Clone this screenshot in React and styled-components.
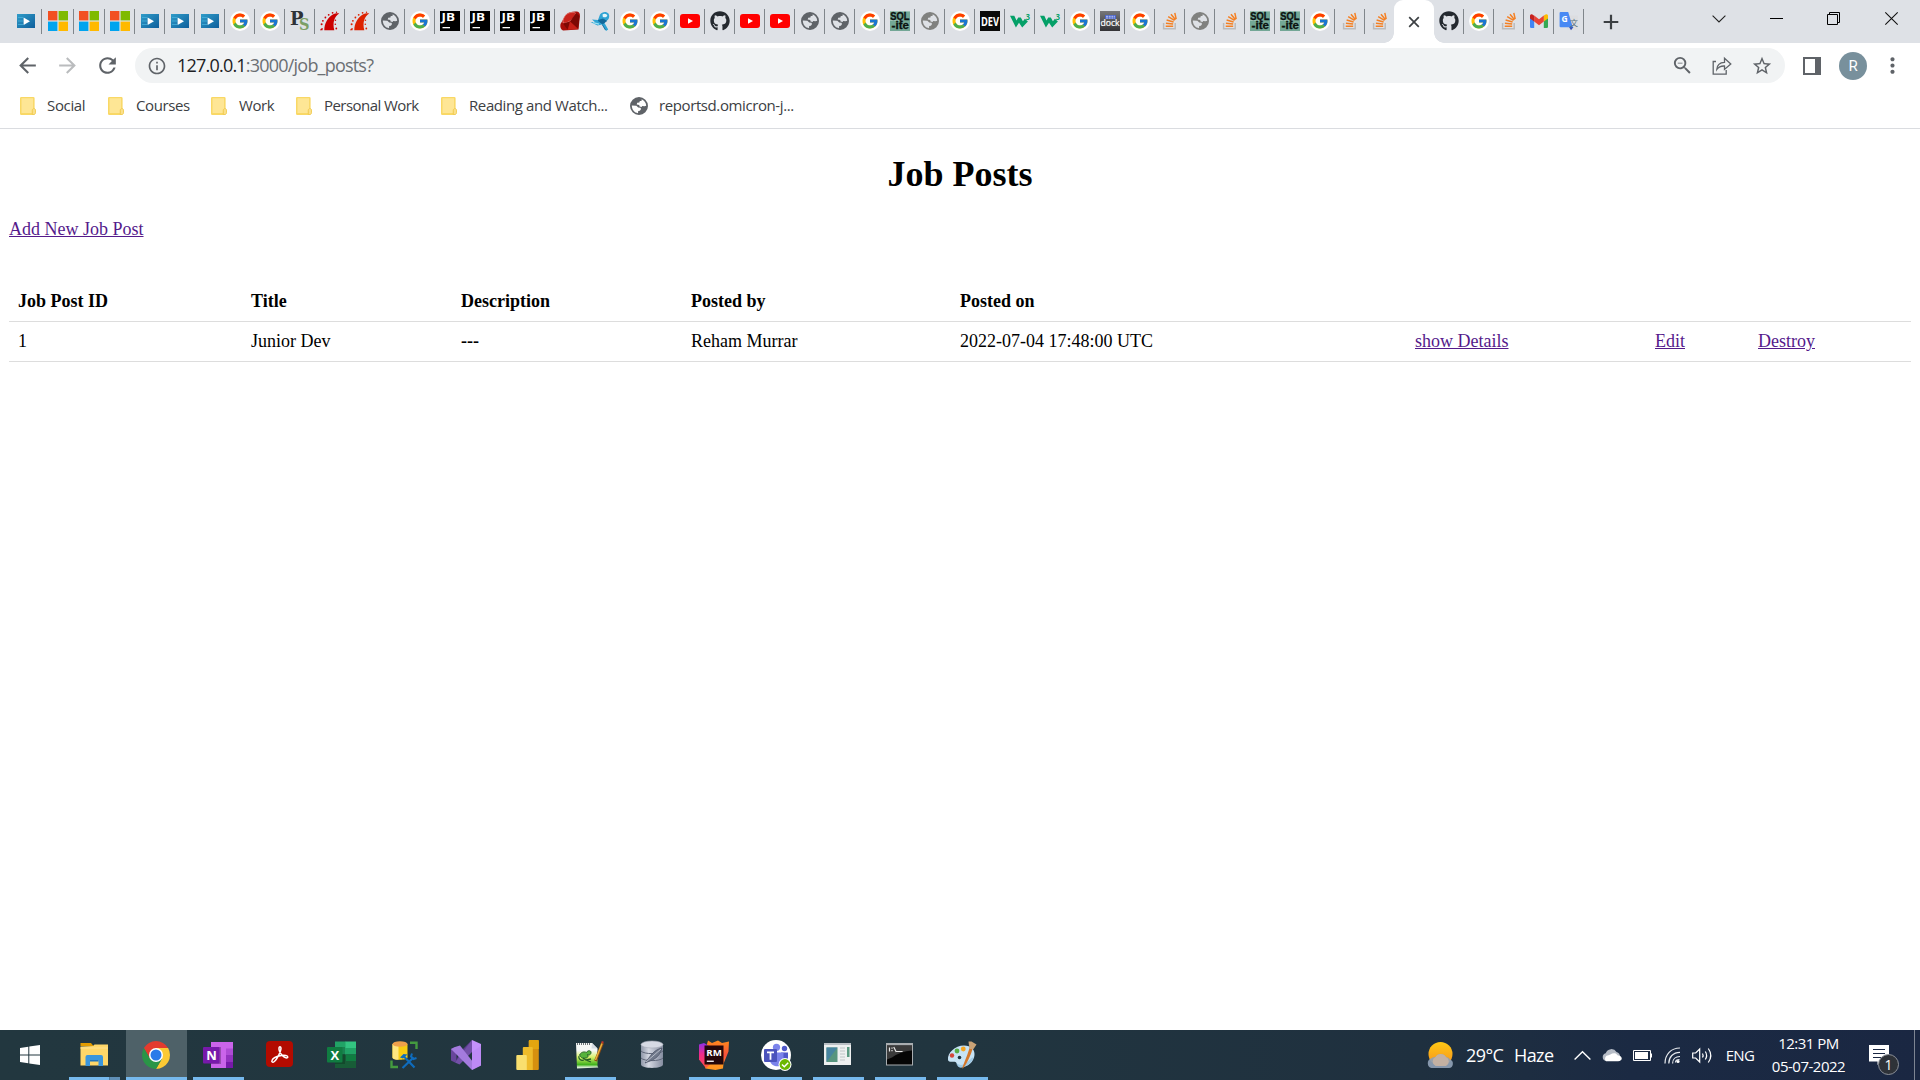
import React from "react";
import styled, { createGlobalStyle, css } from "styled-components";
import { FcGoogle } from "react-icons/fc";
import { FaGithub } from "react-icons/fa";
import {
  MdArrowBack,
  MdArrowForward,
  MdRefresh,
  MdInfoOutline,
  MdZoomOut,
  MdStarBorder,
  MdMoreVert,
} from "react-icons/md";

const GlobalStyle = createGlobalStyle`
  * { box-sizing: border-box; }
  html, body { margin: 0; padding: 0; background: #fff; overflow: hidden; }
  svg { display: block; overflow: visible; }
`;

const uiFont = `"Open Sans", "Noto Sans", sans-serif`;

const Screen = styled.div`
  width: 1920px;
  height: 1080px;
  display: flex;
  flex-direction: column;
  overflow: hidden;
  font-family: ${uiFont};
`;

/* ---------- tab strip ---------- */

const TabStrip = styled.div`
  height: 43px;
  flex: none;
  display: flex;
  align-items: stretch;
  padding-left: 11px;
  background: #dee1e6;
`;

const Tab = styled.div`
  width: ${(p) => p.$w || 30}px;
  flex: none;
  display: flex;
  align-items: flex-start;
  padding: 11px 0 0 ${(p) => p.$pad || 5}px;
  ${(p) =>
    !p.$bare &&
    css`
      background: linear-gradient(#80868b, #80868b) right 9px / 1px 25px no-repeat;
    `}
`;

const ActiveTab = styled.div`
  position: relative;
  width: 40px;
  flex: none;
  display: flex;
  align-items: center;
  justify-content: center;
  background: #fff;
  border-radius: 9px 9px 0 0;
  &::before,
  &::after {
    content: "";
    position: absolute;
    bottom: 0;
    width: 10px;
    height: 10px;
  }
  &::before {
    left: -10px;
    background: radial-gradient(circle at 0 0, transparent 9.5px, #fff 10px);
  }
  &::after {
    right: -10px;
    background: radial-gradient(circle at 100% 0, transparent 9.5px, #fff 10px);
  }
`;

const NewTab = styled.div`
  width: 54px;
  display: flex;
  align-items: center;
  justify-content: center;
`;

const WindowControls = styled.div`
  margin-left: auto;
  display: flex;
  height: 37px;
`;

const WindowButton = styled.div`
  width: ${(p) => p.$w || 57}px;
  display: flex;
  align-items: center;
  justify-content: center;
`;

const Disc = styled.div`
  width: 20px;
  height: 20px;
  display: flex;
  align-items: center;
  justify-content: center;
  background: #fff;
  border-radius: 50%;
`;

const VideoIcon = () => (
  <svg width="20" height="20" viewBox="0 0 20 20">
    <defs>
      <linearGradient id="vid" x1="0" y1="0" x2="1" y2="1">
        <stop offset="0" stopColor="#2f9cc9" />
        <stop offset="1" stopColor="#0f5f9c" />
      </linearGradient>
    </defs>
    <rect x="1" y="3" width="18" height="14" fill="url(#vid)" />
    <path d="M2 6.5h5M2 10h5M2 13.5h5" stroke="#46b3dc" strokeWidth=".8" />
    <path d="M7.6 6.6v7.4l6.4-3.7z" fill="#fff" />
  </svg>
);

const MicrosoftIcon = () => (
  <svg width="20" height="20" viewBox="0 0 20 20">
    <path fill="#f25022" d="M0 0h9.4v9.4H0z" />
    <path fill="#7fba00" d="M10.6 0H20v9.4h-9.4z" />
    <path fill="#00a4ef" d="M0 10.6h9.4V20H0z" />
    <path fill="#ffb900" d="M10.6 10.6H20V20h-9.4z" />
  </svg>
);

const GoogleIcon = () => (
  <Disc>
    <FcGoogle size={18} />
  </Disc>
);

const PsIcon = () => (
  <svg width="20" height="20" viewBox="0 0 20 20" fontFamily="DejaVu Serif, serif" fontWeight="700">
    <text x="0" y="13.500" fontSize="18" fill="#2e3338" textLength="13.500" lengthAdjust="spacingAndGlyphs">P</text>
    <text x="9" y="19.300" fontSize="17" fill="#7b9f66" textLength="10.500" lengthAdjust="spacingAndGlyphs">S</text>
  </svg>
);

const RailsIcon = ({ color }) => (
  <svg width="20" height="20" viewBox="0 0 20 20" fill={color}>
    <path d="M4.300 19.300C4.300 12.500 7.800 6.300 12.800 3.500c2.200-1.200 4.500-1.400 6.400-.9C14.500 5.500 12.300 11.500 14.300 19.300z" />
    <path d="M0 19.300c.7-1.500 1.600-2.200 2.800-2.300l-.3 2.300z" />
    <circle cx="1.600" cy="13.300" r="1" />
    <circle cx="2.900" cy="9.800" r=".9" />
    <circle cx="5.400" cy="6.500" r=".9" />
    <circle cx="8.700" cy="3.800" r=".9" />
    <circle cx="12.600" cy="1.800" r=".9" />
    <circle cx="16.500" cy="1.200" r=".7" />
    <circle cx="15.400" cy="9.300" r=".8" />
    <circle cx="15.300" cy="13.300" r=".8" />
    <circle cx="16.300" cy="17.500" r=".9" />
  </svg>
);

const Centered = styled.div`
  width: 20px;
  height: 20px;
  display: flex;
  align-items: center;
  justify-content: center;
  color: ${(p) => p.$color};
`;

const GlobeIcon = ({ color = "#5f6368" }) => (
  <svg width="20" height="20" viewBox="0 0 20 20">
    <path
      fill={color}
      fillRule="evenodd"
      d="M10 1a9 9 0 1 0 0 18a9 9 0 0 0 0-18zM12.700 3.300C15.500 4.500 17.200 7 17.200 9.700l-1.700.6-2.300-.4-.6 1.100-2-.6-.4-1.500-2.500-.5.500-1.600 2.200-.2.400-1.500 1.700-.2zM2.800 9.600l4.600.1 1.800 1.800 2.200.2.700 1.300-1.200 1.700-1.700.3-.2 2.200C5.600 16.900 2.900 14 2.800 9.600z"
    />
  </svg>
);

const JetBrainsIcon = () => (
  <svg width="20" height="20" viewBox="0 0 20 20">
    <path d="M0 0h20v20H0z" />
    <text x="1.500" y="9.600" fontSize="10" fontWeight="700" fontFamily="Open Sans, sans-serif" fill="#fff" textLength="13.500" lengthAdjust="spacingAndGlyphs">JB</text>
    <path d="M2.500 16h7.500v1.300H2.500z" fill="#fff" />
  </svg>
);

const RubyIcon = () => (
  <svg width="20" height="20" viewBox="0 0 20 20">
    <path d="M6 3.500C9 1 14 0 18 .8c1.500 1 2 2.500 1.900 4.200L18.500 18.500 3 19.500C.8 18.500-.2 16 .5 13z" fill="#a80d08" />
    <path d="M6 3.800C9 1.200 13 .8 15.500 2c.5 2-3 6.500-6 8.300-2 1.300-5.500 2.500-6.500 1.500-.8-2.500 1.500-6.500 3-8z" fill="#c9231c" stroke="#e9938c" strokeWidth=".7" />
    <path d="M16 2l3.500 3-1.300 12.500L10 10.500zM3 12.500l7-2-2.500 8z" fill="#7c0804" />
    <path d="M10 10.500l8 7.500-10 .8z" fill="#c62018" />
  </svg>
);

const BirdIcon = () => (
  <svg width="20" height="20" viewBox="0 0 20 20">
    <path d="M10 3.500C12 .5 16.500 0 18.500 2.500c1.300 2 .8 5-.8 6.500l-3.500 2.500 4 7-2.200 1.500-4-6.500-4.500 1L.5 11l4.500.3L2 8.500l6 .5z" fill="#2fa4d4" />
    <path d="M12.500 3.500c2-1.500 4.500-.5 4.800 1.300-1 1.700-3 2-4.500.9z" fill="#e3f6fb" />
    <path d="M8 9.500l5-1.500 3.500 2-4 3zM12.500 14l3 5" fill="#14699b" stroke="#14699b" strokeWidth=".9" />
    <path d="M3 11.600l6 1.500" stroke="#9fe0f2" strokeWidth="1.200" />
  </svg>
);

const YouTubeIcon = () => (
  <svg width="20" height="20" viewBox="0 0 20 20">
    <rect y="3" width="20" height="14" rx="3" fill="#f00" />
    <path d="M8 7.200v5.600l5-2.800z" fill="#fff" />
  </svg>
);

const SqliteIcon = () => (
  <svg width="20" height="20" viewBox="0 0 20 20">
    <path d="M0 0h20v20H0z" fill="#73a796" />
    <path d="M0 0h20v1H0zM0 9h13v1H0z" fill="#9cc3b6" />
    <g fontFamily="Liberation Sans, sans-serif" fontWeight="700" fill="#0b1210" stroke="#0b1210" strokeWidth=".3">
      <text x=".3" y="8.800" fontSize="10.500" textLength="19.200" lengthAdjust="spacingAndGlyphs">SQL</text>
      <text x="1.500" y="18.200" fontSize="11.500" textLength="17.500" lengthAdjust="spacingAndGlyphs">-ite</text>
    </g>
  </svg>
);

const DevIcon = () => (
  <svg width="20" height="20" viewBox="0 0 20 20">
    <path d="M0 0h20v20H0z" fill="#0a0a0a" />
    <text x=".9" y="14.600" fontSize="12.500" fontWeight="700" fontFamily="Open Sans, sans-serif" fill="#fff" textLength="18.200" lengthAdjust="spacingAndGlyphs">DEV</text>
  </svg>
);

const W3Icon = () => (
  <svg width="20" height="20" viewBox="0 0 20 20">
    <path d="M0 4.800h4.300l2.200 4.800 1.700-3.200h2.600l2.100 3.900 2-2.500 3 2.700-5.700 5.900-3.200-4.700-3.100 4.700z" fill="#04a068" />
    <text x="15.700" y="9" fontSize="8" fontWeight="700" fontFamily="Open Sans, sans-serif" fill="#04a068" textLength="4.200" lengthAdjust="spacingAndGlyphs">3</text>
  </svg>
);

const DockIcon = () => (
  <svg width="20" height="20" viewBox="0 0 20 20">
    <defs>
      <linearGradient id="dock" x1="0" y1="0" x2="0" y2="1">
        <stop offset="0" stopColor="#77777a" />
        <stop offset="1" stopColor="#333336" />
      </linearGradient>
    </defs>
    <path d="M0 0h20v20H0z" fill="url(#dock)" />
    <rect x="5" y="4" width="11" height="4" fill="#4a63c8" />
    <path d="M6 5.300h9M6 7h9" stroke="#dde3ff" strokeWidth=".8" strokeDasharray="2 .7" />
    <text x=".4" y="15.300" fontSize="9.500" fontFamily="Open Sans, sans-serif" fill="#fff" stroke="#fff" strokeWidth=".2" textLength="19.200" lengthAdjust="spacingAndGlyphs">dock</text>
  </svg>
);

const StackIcon = () => (
  <svg width="20" height="20" viewBox="0 0 20 20" fill="none">
    <path d="M3.600 12v5.700h11.600V12" stroke="#bcbbbb" strokeWidth="1.500" />
    <g stroke="#f48024" strokeWidth="1.500">
      <path d="M5.700 15.300h7.500M5.900 12.300l7.300.8M6.600 9l7 2M8.200 5.700l6.300 3.700M11 3.200l4.500 5.500M14.800 1.900l1.400 6.200" />
    </g>
  </svg>
);

const GmailIcon = () => (
  <svg width="20" height="20" viewBox="0 0 20 20">
    <path d="M1 5.500h4.200V17H2.300A1.300 1.300 0 0 1 1 15.700z" fill="#4285f4" />
    <path d="M14.800 5.500H19v10.200a1.300 1.300 0 0 1-1.300 1.300h-2.900z" fill="#34a853" />
    <path d="M14.800 4.500L17 3.300c1.200-.4 2 .4 2 1.700v2.400l-4.200 3.200z" fill="#fbbc04" />
    <path d="M5.200 4.500v6.100L10 14.300l4.800-3.700V4.500L10 8.200z" fill="#ea4335" />
    <path d="M1 5c0-1.500 1.200-2.300 2.400-1.500l1.800 1.200v5.900L1 7.400z" fill="#c5221f" />
  </svg>
);

const TranslateIcon = () => (
  <svg width="20" height="20" viewBox="0 0 20 20">
    <rect x="8" y="4.500" width="11" height="14" rx="1" fill="#dcdde0" />
    <path d="M10 16h4.500L12 19.300z" fill="#3450b5" />
    <path d="M1.600 1h7.600l4.600 15.300H1.600A1 1 0 0 1 .6 15.300V2a1 1 0 0 1 1-1z" fill="#4889f4" />
    <text x="11" y="14.500" fontSize="8" fontFamily="Noto Sans CJK SC, sans-serif" fill="#546e7a">文</text>
    <text x="2.400" y="11" fontSize="8.500" fontWeight="700" fontFamily="Open Sans, sans-serif" fill="#fff">G</text>
  </svg>
);

const GithubIcon = () => (
  <Centered $color="#24292f">
    <FaGithub size={20} />
  </Centered>
);

const tabIcons = {
  video: <VideoIcon />,
  ms: <MicrosoftIcon />,
  google: <GoogleIcon />,
  ps: <PsIcon />,
  rails: <RailsIcon color="#cc0000" />,
  rails2: <RailsIcon color="#dd2200" />,
  globe: <GlobeIcon />,
  globe2: <GlobeIcon color="#80817f" />,
  jb: <JetBrainsIcon />,
  ruby: <RubyIcon />,
  bird: <BirdIcon />,
  yt: <YouTubeIcon />,
  github: <GithubIcon />,
  sql: <SqliteIcon />,
  dev: <DevIcon />,
  w3: <W3Icon />,
  dock: <DockIcon />,
  so: <StackIcon />,
  gmail: <GmailIcon />,
  translate: <TranslateIcon />,
};

const tabsBefore = [
  ["video", 31], ["ms", 32, 6], ["ms", 31], "ms", "video", "video", "video", "google", "google", "ps",
  "rails", "rails2", "globe", "google", "jb", "jb", "jb", "jb", "ruby", "bird", "google", "google",
  "yt", "github", "yt", "yt", "globe", "globe", "google", "sql", "globe2", "google", "dev", "w3", "w3",
  "google", "dock", "google", "so", "globe2", "so", "sql", "sql", "google", "so", "so",
];
const tabsAfter = ["github", "google", "so", "gmail", "translate"];

const renderTab = (entry, i, list, bareLast) => {
  const [name, w, pad] = Array.isArray(entry) ? entry : [entry];
  const bare = bareLast && i === list.length - 1;
  return (
    <Tab key={i} $w={bare ? 29 : w} $pad={pad} $bare={bare}>
      {tabIcons[name]}
    </Tab>
  );
};

/* ---------- toolbar ---------- */

const Toolbar = styled.div`
  height: 45px;
  flex: none;
  display: flex;
  align-items: center;
  padding: 0 11px 0 7px;
  background: #fff;
`;

const NavButton = styled.div`
  width: 40px;
  height: 34px;
  display: flex;
  align-items: center;
  justify-content: center;
  color: ${(p) => (p.$off ? "#babcbe" : "#5f6368")};
`;

const Omnibox = styled.div`
  width: 1650px;
  height: 35px;
  margin-left: 8px;
  display: flex;
  align-items: center;
  padding: 0 3px 0 12px;
  border-radius: 18px;
  background: #f1f3f4;
  color: #5f6368;
`;

const Address = styled.div`
  flex: 1;
  margin: 0 0 1px 10px;
  font-size: 18px;
  line-height: 24px;
  letter-spacing: -0.79px;
  color: #6b6f73;
  span {
    color: #202124;
  }
`;

const Action = styled.div`
  width: 40px;
  display: flex;
  justify-content: center;
`;

const PanelButton = styled.div`
  width: 18px;
  height: 18px;
  margin-left: 18px;
  border: solid #5f6368;
  border-width: 2px 6px 2px 2px;
`;

const Avatar = styled.div`
  width: 28px;
  height: 28px;
  margin-left: 18px;
  border-radius: 50%;
  background: #78909c;
  color: #fff;
  font: 15px/28px Roboto, sans-serif;
  text-align: center;
`;

const Menu = styled.div`
  margin-left: 13px;
  color: #5f6368;
`;

/* ---------- bookmarks ---------- */

const Bookmarks = styled.div`
  height: 41px;
  flex: none;
  display: flex;
  align-items: center;
  padding: 0 0 5px 20px;
  border-bottom: 1px solid #dadce0;
`;

const Bookmark = styled.div`
  width: ${(p) => p.$w}px;
  display: flex;
  align-items: center;
  gap: ${(p) => p.$gap || 12}px;
  white-space: nowrap;
  color: #3c4043;
`;

const BookmarkLabel = styled.span`
  padding-bottom: 1px;
  font-size: 15px;
  line-height: 19px;
  letter-spacing: ${(p) => p.$track || -0.4}px;
`;

const FolderIcon = () => (
  <svg width="16" height="18" viewBox="0 0 16 18">
    <path d="M1.300 0h12A1.300 1.300 0 0 1 14.600 1.300v15.400A1.300 1.300 0 0 1 13.300 18h-12A1.300 1.300 0 0 1 0 16.700V1.300A1.300 1.300 0 0 1 1.300 0z" fill="#f9d865" />
    <path d="M1.500 1.200h11.600v10.600l-1.200 1.400V16H1.500z" fill="#fee695" />
    <path d="M12.300 17.500v-4.300c0-1.200 1-1.600 1.700-1.600s1.500.5 1.500 1.500v2.700c0 1-.8 1.700-1.700 1.700z" fill="#fbe08a" stroke="#efc94f" strokeWidth=".9" />
  </svg>
);

const bookmarks = [
  { label: "Social", w: 88, track: -0.35, gap: 11 },
  { label: "Courses", w: 103 },
  { label: "Work", w: 85 },
  { label: "Personal Work", w: 145, track: -0.55 },
  { label: "Reading and Watch...", w: 188 },
  { label: "reportsd.omicron-j...", w: 180, gap: 10, globe: true },
];

/* ---------- page ---------- */

const Page = styled.main`
  flex: 1;
  padding: 0 9px;
  font: 18px/21px "Liberation Serif", serif;
  color: #000;
`;

const Heading = styled.h1`
  margin: 24px 0;
  font-size: 36px;
  line-height: 42px;
  font-weight: 700;
  text-align: center;
`;

const Link = styled.a`
  color: #551a8b;
  text-decoration: underline;
`;

const Table = styled.table`
  width: 1902px;
  margin-top: 42px;
  table-layout: fixed;
  border-collapse: separate;
  border-spacing: 0;
  th,
  td {
    height: 40px;
    padding: 9px;
    border-bottom: 1px solid #ddd;
    text-align: left;
    white-space: nowrap;
  }
`;

const columns = [
  [233, "Job Post ID"],
  [210, "Title"],
  [230, "Description"],
  [269, "Posted by"],
  [455, "Posted on"],
  [240, ""],
  [103, ""],
  [162, ""],
];

/* ---------- taskbar ---------- */

const Taskbar = styled.div`
  height: 50px;
  flex: none;
  display: flex;
  background: linear-gradient(90deg, #22373f 0%, #21353f 50%, #1f303f 74%, #1b2a43 85%, #1a2742 100%);
  color: #fff;
`;

const StartButton = styled.div`
  width: 64px;
  display: flex;
  align-items: center;
  justify-content: center;
  padding-right: 4px;
`;

const TaskButton = styled.div`
  width: 61px;
  margin-right: 1px;
  display: flex;
  flex-direction: column;
  align-items: center;
  background: ${(p) => (p.$state === "active" ? "#4e6168" : "transparent")};
  svg {
    margin: 10px 1px 7px 0;
  }
  &::after {
    content: "";
    width: ${(p) => (p.$state === "active" ? 61 : 51)}px;
    height: 3px;
    background: ${(p) =>
      p.$state === "stack"
        ? "linear-gradient(90deg, #76b9ed 40px, #3f6a8b 40px, #5f8fb6 41px)"
        : p.$state
        ? "#76b9ed"
        : "transparent"};
  }
`;

const Tray = styled.div`
  flex: 1;
  display: flex;
  justify-content: flex-end;
  align-items: center;
`;

const Weather = styled.div`
  display: flex;
  align-items: center;
  width: 136px;
  font-size: 18px;
  letter-spacing: -0.6px;
  white-space: nowrap;
`;

const WeatherTemp = styled.span`
  width: 48px;
  margin-left: 12px;
`;

const TrayIcon = styled.div`
  width: ${(p) => p.$w}px;
  display: flex;
  justify-content: center;
`;

const Language = styled.div`
  width: 37px;
  padding-right: 3px;
  display: flex;
  justify-content: center;
  font-size: 15px;
  letter-spacing: -0.6px;
`;

const Clock = styled.div`
  width: 97px;
  font-size: 15px;
  line-height: 23px;
  letter-spacing: -0.5px;
  text-align: center;
  white-space: nowrap;
`;

const Notifications = styled.div`
  position: relative;
  width: 57px;
  height: 50px;
  padding: 15px 0 0 12px;
`;

const Badge = styled.span`
  position: absolute;
  left: 21px;
  top: 24px;
  width: 21px;
  height: 21px;
  border: 1px solid #8b9098;
  border-radius: 50%;
  background: #2e3238;
  font-size: 14px;
  line-height: 19px;
  text-align: center;
`;

const ShowDesktop = styled.div`
  width: 6px;
  height: 50px;
  border-left: 1px solid #7d8592;
`;

const T = ({ children }) => (
  <svg width="30" height="30" viewBox="0 0 30 30">
    {children}
  </svg>
);

const ExplorerIcon = () => (
  <T>
    <path d="M1.500 3h10.500l2.500 3H1.500z" fill="#e19b00" />
    <path d="M1.500 6.500L14 6l1.500-1.500H29v21H1.500z" fill="#ffd768" />
    <path d="M1.500 7h27.500v2H1.500z" fill="#ffe08a" opacity=".6" />
    <path d="M6.500 26V17q0-2 2-2h13.500q2 0 2 2v9h-4.500v-6h-8.500v6z" fill="#3a96dd" />
    <path d="M11 20h8.500v1.500H11z" fill="#1f74bb" />
  </T>
);

const ChromeIcon = () => (
  <T>
    <path d="M2.880 8A14 14 0 0 1 27.120 8H15v7l-6.060 3.500z" fill="#e33b2e" />
    <path d="M27.120 8A14 14 0 0 1 15 29l6.060-10.500L15 15V8z" fill="#fcc934" />
    <path d="M15 29A14 14 0 0 1 2.880 8l6.060 10.500L15 15l6.060 3.500z" fill="#2a9547" />
    <circle cx="15" cy="15" r="7" fill="#fff" />
    <circle cx="15" cy="15" r="5.500" fill="#2a7be9" />
  </T>
);

const OneNoteIcon = () => (
  <T>
    <path d="M8 2h22v26H8z" fill="#ca64ea" />
    <path d="M23 8.500h7V15h-7z" fill="#ae4bd5" />
    <path d="M23 15h7v6.500h-7z" fill="#9332bf" />
    <path d="M23 21.500h7V28h-7z" fill="#7719aa" />
    <path d="M8 7h10v17H8z" fill="#000" opacity=".25" />
    <rect y="7" width="16.500" height="16.500" rx="1" fill="#7719aa" />
    <text x="3.200" y="20" fontSize="13" fontWeight="700" fontFamily="Open Sans, sans-serif" fill="#fff">N</text>
  </T>
);

const AcrobatIcon = () => (
  <T>
    <rect x="1" y="1" width="27" height="26" rx="4" fill="#b30b00" />
    <path d="M7 20.500c1-3 6-4.500 9.500-5 3-.4 6.500 0 6.300 1.600-.3 1.600-3.300.6-5-1.100-2.300-2.300-4-6-3.800-8 .2-2 2-1.700 2 .2 0 3-2.500 7.500-4.200 10.300-1.500 2.500-3.500 4.300-4.600 3.500-.6-.4-.4-1-.2-1.500z" fill="none" stroke="#fff" strokeWidth="1.500" />
  </T>
);

const ExcelIcon = () => (
  <T>
    <path d="M8 1.500h11v13H8z" fill="#21a366" />
    <path d="M18.500 1.500H29V8H18.500z" fill="#33c481" />
    <path d="M18.500 8H29v6.500H18.500z" fill="#21a366" />
    <path d="M18.500 14.500H29V21H18.500z" fill="#107c41" />
    <path d="M8 14.500h10.500V21H8zM8 21h21v7H8z" fill="#185c37" />
    <path d="M8 7h10v17H8z" fill="#000" opacity=".2" />
    <rect y="7" width="15.500" height="15.500" rx="1" fill="#107c41" />
    <text x="3.500" y="19.500" fontSize="13" fontWeight="700" fontFamily="Open Sans, sans-serif" fill="#fff">X</text>
  </T>
);

const SsmsIcon = () => (
  <T>
    <path d="M3.500 4v13.500c0 3 15 3 15 0V4z" fill="#f8cc12" />
    <path d="M3.500 4v13.500c0 1.700 3 2.300 6 2.300V5z" fill="#ffe680" />
    <ellipse cx="11" cy="4" rx="7.500" ry="2.800" fill="#f0a04b" />
    <path d="M21 2.800h6.500V9M2.500 20.500V27H9" fill="none" stroke="#449a3f" strokeWidth="2.400" />
    <path d="M14.500 16l11 11.500M24.500 17.500L13.500 28" stroke="#0f6cbd" strokeWidth="2.200" />
    <path d="M11 17.500l3.500-3.500 4 .5-4.500 4z" fill="#0f6cbd" />
    <path d="M23 13.500l-1 3 2.500 2.500 3-1" fill="none" stroke="#0f6cbd" strokeWidth="2" />
  </T>
);

const VisualStudioIcon = () => (
  <T>
    <path d="M0 9l4-2 1.500 1.500V21L4 22.500 0 20.500z" fill="#68469b" />
    <path d="M4 22.500L21 7V0L10 11z" fill="#5d3d90" />
    <path d="M4 22.500l4.500 2L21 12V0z" fill="#7350a8" />
    <path d="M4 7l5-1.500L22 22l-1 8L0 9z" fill="#a47bde" />
    <path d="M21 0l9 4v21.500L21 30z" fill="#c490fb" />
    <path d="M21 30V12l9-6v19.500z" fill="#b683f0" opacity=".5" />
  </T>
);

const PowerBiIcon = () => (
  <T>
    <g transform="translate(1.800 0)">
      <path d="M14 1q0-1 1-1h8q1 0 1 1v28q0 1-1 1h-9z" fill="#d6900f" />
      <path d="M14 1q0-1 1-1h8q1 0 1 1v8H14z" fill="#e3a50f" />
      <path d="M8 8q0-1 1-1h8q1 0 1 1v22H8z" fill="#eebb2a" />
      <path d="M1.500 16q0-1 1-1H11q1 0 1 1v14H2.500q-1 0-1-1z" fill="#f9df6e" />
    </g>
  </T>
);

const NotepadIcon = () => (
  <T>
    <defs>
      <linearGradient id="npp" x1="0" y1="0" x2="0" y2="1">
        <stop offset=".3" stopColor="#f5f7f5" />
        <stop offset=".55" stopColor="#d9f26c" />
        <stop offset=".85" stopColor="#3fb21c" />
        <stop offset=".95" stopColor="#d6ecd0" />
      </linearGradient>
    </defs>
    <path d="M1 3h16l5.500 5.500V26l.8 1.500L2 28.500z" fill="url(#npp)" />
    <path d="M17 3l-.5 5.500h6z" fill="#d5dbe2" />
    <path d="M2 4h14" stroke="#6c7377" strokeWidth="2" strokeDasharray="1 1" />
    <path d="M4.500 15c2-3.500 5-3.500 7-2.500 1-2.500 5-2.500 4.500.5-.5 2.500-3 2-4 1.500 2 1 1 3.500-1.500 3.500-3 1-5-1-6-3z" fill="#55b33a" stroke="#255f27" strokeWidth=".9" />
    <path d="M4 16c-1 3 2 5 5 4M8 18l3 2 5-1M12 20.500l4 1.500" fill="none" stroke="#255f27" strokeWidth="1.300" />
    <path d="M27.500 3L20.500 21" stroke="#8a4a12" strokeWidth="2.800" />
    <path d="M27 3.500l-6.500 16.500" stroke="#eab03b" strokeWidth="1.500" />
    <path d="M26.500 1.800l2 .8" stroke="#c2352b" strokeWidth="1.800" />
  </T>
);

const DatabaseIcon = () => (
  <T>
    <defs>
      <linearGradient id="db">
        <stop offset="0" stopColor="#8f97a8" />
        <stop offset=".35" stopColor="#d4d8e2" />
        <stop offset="1" stopColor="#858da0" />
      </linearGradient>
    </defs>
    <path d="M4 4v20.500c0 4.500 22 4.500 22 0V4z" fill="url(#db)" />
    <ellipse cx="15" cy="4.500" rx="11" ry="3.500" fill="#d6dae4" stroke="#a2a8b5" strokeWidth=".6" />
    <path d="M4 11c3 3.500 19 3.500 22 0M4 18c3 3.500 19 3.500 22 0" fill="none" stroke="#5e6678" />
    <path d="M25 8c-9 2-12 9-17 15 7-3 14-4 17-15z" fill="#70798b" stroke="#4e5668" strokeWidth=".8" />
    <path d="M9 22L24 9" stroke="#c9cdd7" strokeWidth=".8" />
  </T>
);

const RubyMineIcon = () => (
  <T>
    <defs>
      <linearGradient id="rmLeft" x1="0" y1="0" x2="0" y2="1">
        <stop offset="0" stopColor="#8f2fe6" />
        <stop offset=".45" stopColor="#ef2b8a" />
        <stop offset="1" stopColor="#ff4b4b" />
      </linearGradient>
      <linearGradient id="rmRight" x1="0" y1="0" x2="0" y2="1">
        <stop offset="0" stopColor="#fd8a1c" />
        <stop offset=".6" stopColor="#f9503c" />
        <stop offset="1" stopColor="#ff8a25" />
      </linearGradient>
    </defs>
    <path d="M8 4l1-3.500L13 3l6-2.500 4 2.500L30 1.500l-.5 10L24 25H8z" fill="url(#rmRight)" />
    <path d="M0 4.500L5 3l5 3v22l-4-1-6-7.500z" fill="url(#rmLeft)" />
    <path d="M5.500 23l1 5.500 10 1.500 7.500-1.500.5-5z" fill="#ff9420" />
    <path d="M5.500 23l1 5.500 6-5.500z" fill="#ff5b3d" />
    <path d="M5.500 5.500h19v19h-19z" fill="#23060a" />
    <text x="7.300" y="15.500" fontSize="9.500" fontWeight="700" fontFamily="Open Sans, sans-serif" fill="#fff" textLength="15.500" lengthAdjust="spacingAndGlyphs">RM</text>
    <path d="M7.800 20.600h7v1.300h-7z" fill="#fff" />
  </T>
);

const TeamsIcon = () => (
  <T>
    <circle cx="15" cy="15" r="15" fill="#fff" />
    <circle cx="15.500" cy="7.300" r="3.600" fill="#7b83eb" />
    <circle cx="23.500" cy="8.500" r="2.700" fill="#5059c9" />
    <path d="M20 12.500h7v7q0 4-5 4z" fill="#5059c9" />
    <path d="M9 12.500h13.500v8.500c0 7-12 7-13.500 0z" fill="#7b83eb" />
    <rect x="3" y="9" width="13" height="13" rx="1" fill="#4b53bc" />
    <path d="M6 12.300h7M9.500 12v7.700" stroke="#fff" strokeWidth="1.800" />
    <circle cx="24" cy="24.500" r="6.500" fill="#fff" />
    <circle cx="24" cy="24.500" r="5.400" fill="#6bb700" />
    <path d="M21 24.500l2.300 2.300 3.900-4" fill="none" stroke="#fff" strokeWidth="1.500" />
  </T>
);

const WindowIcon = () => (
  <T>
    <path d="M1 3h27v22H1z" fill="#eef0f0" />
    <path d="M1 3h27v2H1z" fill="#b9bfc4" />
    <path d="M3.500 7.500h11V22h-11z" fill="#58957e" />
    <path d="M3.500 7.500h11L3.500 22z" fill="#4784a0" />
    <path d="M17 8h5M17 11h5M17 14h5M17 17h5M17 20h5" stroke="#cfd3d5" strokeWidth="1.500" />
    <path d="M24 7h2.500v10H24z" fill="#5a9a82" />
  </T>
);

const CommandIcon = () => (
  <T>
    <path d="M1 3h27v22.500H1z" fill="#a9adb0" />
    <path d="M2 5.500h25v19H2z" fill="#050505" />
    <path d="M2 5.500h25v5q-12 1-20 7l-5 2z" fill="#3a3a3a" />
    <path d="M4.500 8v3M7 8v.1M7 10.500v.1M9 7.500l2 4M12 11.500h5" stroke="#e6e6e6" strokeWidth="1.200" strokeLinecap="square" />
  </T>
);

const PaintIcon = () => (
  <T>
    <path d="M1 20C0 13 8 5.500 17 5.500c7 0 11 4 10.500 9.500-.5 7-7 12-13.500 12.500-4 .2-3-4-5.500-5.500-2-1-6.500 1-7.500-2z" fill="#c7e3f5" />
    <path d="M9 23c3 2 6 3 10 0 3-2 5-5 7.500-6-1 6-7 10-12.500 10.500-3 0-4-2-5-4.500z" fill="#8fbfe0" opacity=".7" />
    <circle cx="5" cy="15.500" r="2.200" fill="#d5473b" />
    <circle cx="10" cy="11" r="2.400" fill="#57ad45" />
    <circle cx="16.300" cy="9" r="2.400" fill="#f5a623" />
    <circle cx="12.500" cy="17.500" r="1.800" fill="#1f343f" />
    <path d="M15.500 28.500c-1-.5 4-10 7.500-22l3 1C23.500 17 17 29 15.500 28.500z" fill="#d4772a" />
    <path d="M21.500 1.500l3 0 5 3-3 4.500h-4z" fill="#c9a377" />
  </T>
);

const WindowsLogo = () => (
  <svg width="20" height="20" viewBox="0 0 20 20" fill="#fff">
    <path d="M0 3l8.300-1.200v7.700H0zM9.300 1.600L20 0v9.500H9.300zM0 10.500h8.300v7.700L0 17zM9.300 10.500H20V20L9.300 18.400z" />
  </svg>
);

const tasks = [
  [<ExplorerIcon />, "stack"],
  [<ChromeIcon />, "active"],
  [<OneNoteIcon />, "open"],
  [<AcrobatIcon />],
  [<ExcelIcon />],
  [<SsmsIcon />],
  [<VisualStudioIcon />],
  [<PowerBiIcon />],
  [<NotepadIcon />, "open"],
  [<DatabaseIcon />],
  [<RubyMineIcon />, "open"],
  [<TeamsIcon />, "open"],
  [<WindowIcon />, "open"],
  [<CommandIcon />, "open"],
  [<PaintIcon />, "open"],
];

export default function App() {
  return (
    <Screen>
      <GlobalStyle />
      <TabStrip>
        {tabsBefore.map((t, i) => renderTab(t, i, tabsBefore, true))}
        <ActiveTab>
          <svg width="12" height="12" viewBox="0 0 12 12" stroke="#3c4043" strokeWidth="1.700">
            <path d="M1.200 1.200l9.600 9.600M10.800 1.200l-9.600 9.600" />
          </svg>
        </ActiveTab>
        {tabsAfter.map((t, i) => renderTab(t, i, tabsAfter, false))}
        <NewTab>
          <svg width="16" height="16" viewBox="0 0 16 16" stroke="#3c4043" strokeWidth="2.200">
            <path d="M8 .7v14.600M.7 8h14.600" />
          </svg>
        </NewTab>
        <WindowControls>
          <WindowButton>
            <svg width="14" height="8" viewBox="0 0 14 8" fill="none" stroke="#222" strokeWidth="1.100">
              <path d="M.6.600L7 7l6.400-6.400" />
            </svg>
          </WindowButton>
          <WindowButton $w={58}>
            <svg width="13" height="1" viewBox="0 0 13 1">
              <path d="M0 0h13v1H0z" />
            </svg>
          </WindowButton>
          <WindowButton>
            <svg width="13" height="13" viewBox="0 0 13 13" fill="none" stroke="#000">
              <path d="M.5 2.500h10v10H.5zM2.500 2.500v-2h10v10h-2" />
            </svg>
          </WindowButton>
          <WindowButton $w={58}>
            <svg width="13" height="13" viewBox="0 0 13 13" stroke="#111" strokeWidth="1.100">
              <path d="M.3.300l12.400 12.400M12.700.300L.3 12.700" />
            </svg>
          </WindowButton>
        </WindowControls>
      </TabStrip>

      <Toolbar>
        <NavButton><MdArrowBack size={25} /></NavButton>
        <NavButton $off><MdArrowForward size={25} /></NavButton>
        <NavButton><MdRefresh size={25} /></NavButton>
        <Omnibox>
          <MdInfoOutline size={20} />
          <Address><span>127.0.0.1</span>:3000/job_posts?</Address>
          <Action><MdZoomOut size={23} /></Action>
          <Action>
            <svg width="20" height="18" viewBox="0 0 20 18" fill="none" stroke="#5f6368" strokeWidth="1.300">
              <path d="M4 4.500H1.200v12.700h13V13" />
              <path d="M4.800 12.500C5 8 8 5.500 12.500 5.300V1.200l6.300 5.700-6.300 5.500V9c-3.500-.2-6 1-7.700 3.500z" />
            </svg>
          </Action>
          <Action><MdStarBorder size={22} /></Action>
        </Omnibox>
        <PanelButton />
        <Avatar>R</Avatar>
        <Menu><MdMoreVert size={25} /></Menu>
      </Toolbar>

      <Bookmarks>
        {bookmarks.map((b) => (
          <Bookmark key={b.label} $w={b.w} $gap={b.gap}>
            {b.globe ? <GlobeIcon /> : <FolderIcon />}
            <BookmarkLabel $track={b.track}>{b.label}</BookmarkLabel>
          </Bookmark>
        ))}
      </Bookmarks>

      <Page>
        <Heading>Job Posts</Heading>
        <Link>Add New Job Post</Link>
        <Table>
          <colgroup>
            {columns.map(([w], i) => <col key={i} width={w} />)}
          </colgroup>
          <thead>
            <tr>{columns.map(([, label], i) => <th key={i}>{label}</th>)}</tr>
          </thead>
          <tbody>
            <tr>
              <td>1</td>
              <td>Junior Dev</td>
              <td><b>---</b></td>
              <td>Reham Murrar</td>
              <td>2022-07-04 17:48:00 UTC</td>
              <td><Link>show Details</Link></td>
              <td><Link>Edit</Link></td>
              <td><Link>Destroy</Link></td>
            </tr>
          </tbody>
        </Table>
      </Page>

      <Taskbar>
        <StartButton><WindowsLogo /></StartButton>
        {tasks.map(([icon, state], i) => (
          <TaskButton key={i} $state={state}>{icon}</TaskButton>
        ))}
        <Tray>
          <Weather>
            <svg width="28" height="28" viewBox="0 0 28 28">
              <defs>
                <linearGradient id="sun" x1="0" y1="0" x2="0" y2="1">
                  <stop offset="0" stopColor="#ffc814" />
                  <stop offset="1" stopColor="#f7921e" />
                </linearGradient>
              </defs>
              <circle cx="14.500" cy="13" r="12" fill="url(#sun)" />
              <path d="M5.500 27a5 5 0 0 1-.5-9.500 5 5 0 0 1 4.500-1.500 6 6 0 0 1 10.500 0 4.500 4.500 0 0 1 4 2.500 4.400 4.400 0 0 1-1 8.500z" fill="#8fa1b5" opacity=".92" />
              <path d="M9.500 25a5 5 0 0 1 0-9 6 6 0 0 1 10.500 0 5 5 0 0 1 0 9z" fill="#d3b7a0" opacity=".75" />
            </svg>
            <WeatherTemp>29°C</WeatherTemp>
            Haze
          </Weather>
          <TrayIcon $w={40}>
            <svg width="17" height="9" viewBox="0 0 17 9" fill="none" stroke="#fff" strokeWidth="1.400">
              <path d="M.6 8.400l7.900-7.600 7.900 7.600" />
            </svg>
          </TrayIcon>
          <TrayIcon $w={20}>
            <svg width="20" height="14" viewBox="0 0 20 14">
              <path d="M4 13a4 4 0 0 1-.3-7.800A6 6 0 0 1 14.500 4 5 5 0 0 1 18 9z" fill="#b6bcc6" />
              <path d="M4 13.200a3.600 3.600 0 0 1 .5-5.400c3-.5 5-2.800 8-2.600 2 .2 2.500 1.800 3.500 2.300 5 .2 5 5.700 0 5.700z" fill="#fff" />
            </svg>
          </TrayIcon>
          <TrayIcon $w={41}>
            <svg width="19" height="11" viewBox="0 0 19 11">
              <path d="M.5.500h17v10H.5z" fill="none" stroke="#fff" />
              <path d="M2 2h13v7H2zM18 3.500h1v4h-1z" fill="#fff" />
            </svg>
          </TrayIcon>
          <TrayIcon $w={19}>
            <svg width="17" height="17" viewBox="0 0 17 17" fill="none" stroke="#e8ebef" strokeWidth="1.200">
              <path d="M1 16.500C1 7.500 7 1 16 1M4.800 16.500C4.800 10 9 5.300 16 5.300M8.600 16.500c0-4 2.800-7 7.400-7" />
              <circle cx="14" cy="14.500" r="1.600" fill="#fff" stroke="none" />
              <path d="M11.500 15.500c0-1.500 1.500-2.800 4-2.800" />
            </svg>
          </TrayIcon>
          <TrayIcon $w={41}>
            <svg width="21" height="17" viewBox="0 0 21 17" fill="none" stroke="#fff" strokeWidth="1.200">
              <path d="M.7 6h3l4-4v13l-4-4h-3z" />
              <path d="M10.500 6.500q1.200 2 0 4M13.300 4.500q2.600 4 0 8M16.300 1.500q5 7 0 14" />
            </svg>
          </TrayIcon>
          <Language>ENG</Language>
          <Clock>
            12:31 PM
            <br />
            05-07-2022
          </Clock>
          <Notifications>
            <svg width="20" height="20" viewBox="0 0 20 20">
              <path d="M0 0h20v16.500h-8L8.500 20v-3.500H0z" fill="#fff" />
              <path d="M4 4.500h12M4 8.500h12M4 12.500h8" stroke="#1a2742" strokeWidth="1.200" />
            </svg>
            <Badge>1</Badge>
          </Notifications>
          <ShowDesktop />
        </Tray>
      </Taskbar>
    </Screen>
  );
}
